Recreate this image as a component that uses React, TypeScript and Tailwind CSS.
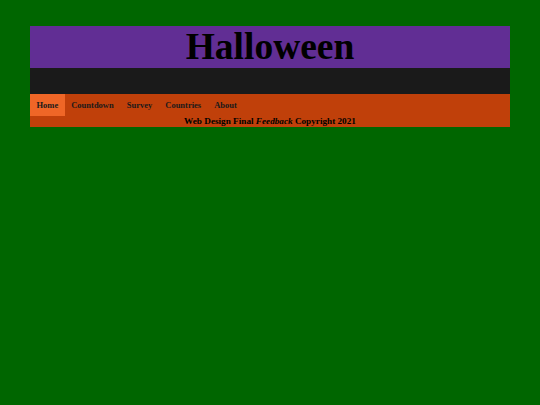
export default function App() {
  const links = ["Home", "Countdown", "Survey", "Countries", "About"]

  return (
    <div className="min-h-[405px] w-full bg-[#006600] pt-[26px] font-['Liberation_Serif',serif]">
      <div className="mx-auto w-[480px]">
        {/* header */}
        <header className="flex h-[42px] items-center justify-center bg-[#612e94]">
          <h1 className="text-[37.5px] font-bold leading-none text-black">Halloween</h1>
        </header>

        <div className="h-[26px] bg-[#1a1a1a]" />

        {/* nav + footer */}
        <div className="bg-[#c0400a]">
          <nav className="flex h-[22px]">
            {links.map((link, i) => (
              <a
                key={link}
                href="#"
                className={`flex items-center px-[6.5px] text-[8.5px] font-bold text-[#1a1a1a] ${
                  i === 0 ? "bg-[#ef6627]" : ""
                }`}
              >
                {link}
              </a>
            ))}
          </nav>
          <footer className="flex h-[11px] items-center justify-center text-[9.2px] font-bold leading-none text-black">
            Web Design Final&nbsp;<em>Feedback</em>&nbsp;Copyright 2021
          </footer>
        </div>
      </div>
    </div>
  )
}
